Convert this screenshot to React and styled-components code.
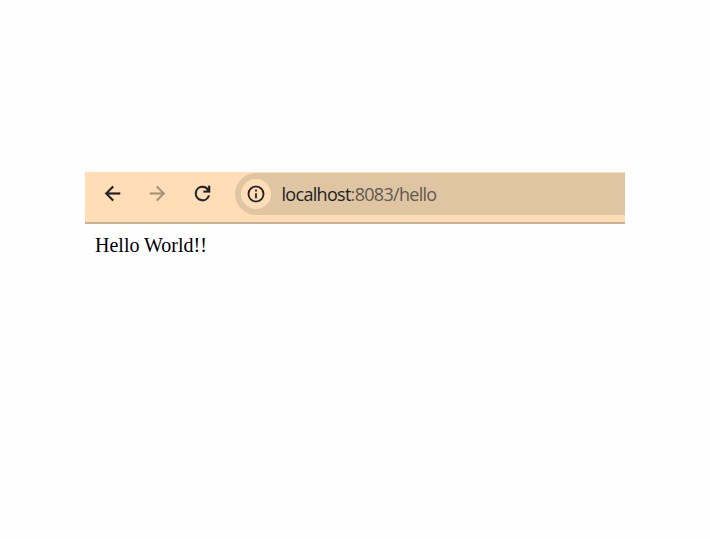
import React from "react";
import styled, { createGlobalStyle } from "styled-components";

const GlobalStyle = createGlobalStyle`
  body { margin: 0; background: #fefefe; }
`;

const Page = styled.main`
  box-sizing: border-box;
  width: 710px;
  height: 539px;
  padding: 172px 85px 0;
  background: #fefefe;
`;

const Toolbar = styled.header`
  box-sizing: border-box;
  display: flex;
  align-items: flex-start;
  height: 52px;
  padding-top: 1px;
  background: #ffdeb7;
  border-bottom: 2px solid #cbb190;
`;

const Navigation = styled.nav`
  display: flex;
  width: 150px;
  height: 41px;
  padding-left: 5px;
  box-sizing: border-box;
`;

const NavButton = styled.button`
  display: flex;
  align-items: center;
  justify-content: center;
  width: 45px;
  height: 41px;
  padding: 0;
  border: 0;
  background: none;
  color: ${({ $muted }) => ($muted ? "#a6937c" : "#202226")};
`;

const Icon = styled.svg`
  display: block;
  width: ${({ $size }) => $size}px;
  height: ${({ $size }) => $size}px;
  fill: currentColor;
  stroke: currentColor;
  stroke-width: 0.2px;
`;

const AddressBar = styled.div`
  box-sizing: border-box;
  display: flex;
  flex: 1;
  align-items: center;
  height: 42px;
  padding-left: 6px;
  border-radius: 21px 0 0 21px;
  background: #dfc5a2;
`;

const SiteInfo = styled.button`
  display: flex;
  align-items: center;
  justify-content: center;
  width: 30px;
  height: 30px;
  padding: 0;
  border: 0;
  border-radius: 50%;
  background: #ffdeb7;
  color: #202226;
`;

const Address = styled.span`
  margin-left: 10.5px;
  padding-bottom: 1px;
  font: 18px/24px "Open Sans", "Noto Sans", sans-serif;
  letter-spacing: -0.7px;
  color: #625a52;
  white-space: nowrap;
`;

const Host = styled.span`
  color: #202226;
`;

const Content = styled.p`
  margin: 0;
  padding: 9px 0 0 10px;
  font: 20px/24px "Liberation Serif", serif;
  color: #000;
`;

export default function App() {
  return (
    <Page>
      <GlobalStyle />
      <Toolbar>
        <Navigation>
          <NavButton aria-label="Back">
            <Icon $size={23} viewBox="0 0 24 24">
              <path d="M20 11H7.83l5.59-5.59L12 4l-8 8 8 8 1.41-1.41L7.83 13H20z" />
            </Icon>
          </NavButton>
          <NavButton aria-label="Forward" $muted>
            <Icon $size={23} viewBox="0 0 24 24">
              <path d="M12 4l-1.41 1.41L16.17 11H4v2h12.17l-5.58 5.59L12 20l8-8z" />
            </Icon>
          </NavButton>
          <NavButton aria-label="Reload">
            <Icon $size={23} viewBox="0 0 24 24">
              <path d="M17.9 6.6A7.96 7.96 0 0 0 12 4a8 8 0 1 0 7.73 10h-2.08A6 6 0 1 1 12 6c1.8 0 3.4.9 4.4 2.2V9H13v2h7V4h-2.1z" />
            </Icon>
          </NavButton>
        </Navigation>
        <AddressBar>
          <SiteInfo aria-label="Site information">
            <Icon $size={20} viewBox="0 0 24 24">
              <path d="M11 17h2v-6h-2zm1-15a10 10 0 1 0 0 20 10 10 0 0 0 0-20zm0 18a8 8 0 1 1 0-16 8 8 0 0 1 0 16zM11 9h2V7h-2z" />
            </Icon>
          </SiteInfo>
          <Address><Host>localhost</Host>:8083/hello</Address>
        </AddressBar>
      </Toolbar>
      <Content>Hello World!!</Content>
    </Page>
  );
}
